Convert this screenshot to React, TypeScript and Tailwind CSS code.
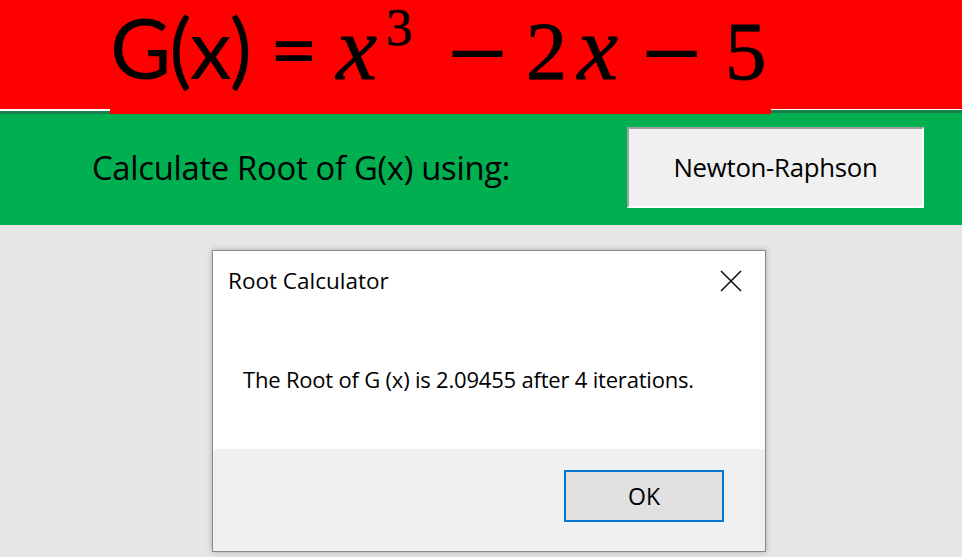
import React from 'react'

function CloseIcon() {
  return (
    <svg width="22" height="22" viewBox="0 0 22 22" className="block">
      <path d="M1 1 L21 21 M21 1 L1 21" stroke="#111" strokeWidth="1.6" fill="none" />
    </svg>
  )
}

export default function App() {
  return (
    <div className="w-[962px] h-[557px] flex flex-col bg-[#e6e6e6] overflow-hidden">
      {/* formula banner */}
      <div className="h-[109px] bg-[#ff0000] flex items-center pl-[110px]">
        <div className="flex items-baseline text-black leading-none -mt-[14px]">
          <span className="text-[84px] font-['Lato',sans-serif] tracking-[-2px]">G(x) =</span>
          <span className="ml-[20px] text-[92px] italic font-['Liberation_Serif',serif] [-webkit-text-stroke:0.8px_black]">x</span>
          <span className="text-[53px] -translate-y-[34px] ml-[9px] font-['Liberation_Serif',serif] [-webkit-text-stroke:0.6px_black]">3</span>
          <span className="ml-[31px] text-[80px] font-['DejaVu_Serif',serif]">−</span>
          <span className="ml-[15px] text-[83px] font-['Liberation_Serif',serif] [-webkit-text-stroke:0.8px_black]">2</span>
          <span className="ml-[10px] text-[92px] italic font-['Liberation_Serif',serif] [-webkit-text-stroke:0.8px_black]">x</span>
          <span className="ml-[20px] text-[80px] font-['DejaVu_Serif',serif]">−</span>
          <span className="ml-[20px] text-[83px] font-['Liberation_Serif',serif] [-webkit-text-stroke:0.8px_black]">5</span>
        </div>
      </div>

      {/* divider strip */}
      <div className="h-[5px] flex">
        <div className="w-[110px] flex flex-col">
          <div className="h-[2px] bg-white" />
          <div className="h-[3px] bg-[#1e7d4c]" />
        </div>
        <div className="w-[661px] bg-[#ff0000]" />
        <div className="flex-1 flex flex-col">
          <div className="h-[1px] bg-white" />
          <div className="h-[3px] bg-[#1e7d4c]" />
          <div className="h-[1px] bg-[#00b050]" />
        </div>
      </div>

      {/* method row */}
      <div className="h-[111px] bg-[#00b050] flex items-center pl-[92px] pr-[38px]">
        <span className="text-[32.8px] text-black font-['Open_Sans',sans-serif] tracking-[-0.3px] -mt-[3px]">
          Calculate Root of G(x) using:
        </span>
        <button className="ml-auto -mt-[4px] w-[297px] h-[81px] bg-[#f0f0f0] border-t-2 border-l-2 border-t-[#a0a0a0] border-l-[#a0a0a0] border-b-2 border-r-2 border-b-white border-r-white text-[25.8px] text-black font-['Open_Sans',sans-serif] tracking-[-0.3px]">
          Newton-Raphson
        </button>
      </div>

      {/* message box */}
      <div className="pl-[212px] pt-[25px]">
        <div className="w-[554px] h-[302px] border border-[#8a8a8a] bg-white flex flex-col shadow-[0_0_6px_rgba(0,0,0,0.25)] font-['Open_Sans',sans-serif]">
          <div className="flex items-center justify-between pl-[15px] pr-[23px] pt-[19px]">
            <span className="text-[22.5px] text-black leading-none">Root Calculator</span>
            <CloseIcon />
          </div>
          <div className="flex-1 flex items-center pl-[30px] pt-[18px]">
            <span className="text-[22px] text-black tracking-[-0.2px]">
              The Root of G (x) is 2.09455 after 4 iterations.
            </span>
          </div>
          <div className="h-[102px] bg-[#f0f0f0] flex justify-end items-start pt-[21px] pr-[41px]">
            <button className="w-[160px] h-[52px] bg-[#e1e1e1] border-2 border-[#0078d7] text-[23px] text-black">
              OK
            </button>
          </div>
        </div>
      </div>
    </div>
  )
}
